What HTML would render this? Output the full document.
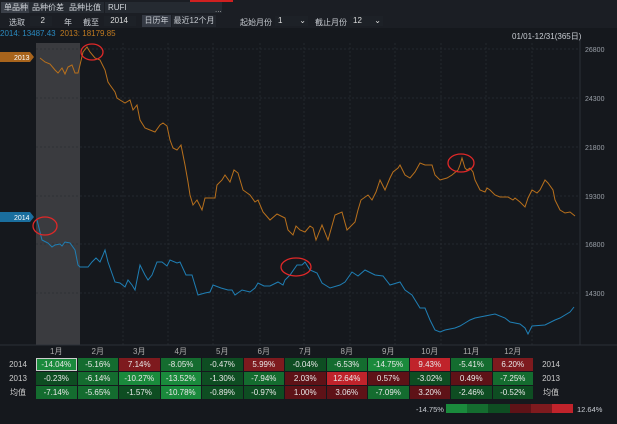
<!DOCTYPE html>
<html><head><meta charset="utf-8"><style>
*{margin:0;padding:0;box-sizing:border-box}
body{width:617px;height:424px;background:#15181d;font-family:"Liberation Sans","Noto Sans CJK SC",sans-serif;color:#c8ccd2;font-size:8px;position:relative;overflow:hidden}
.a{position:absolute}
.tab{position:absolute;top:2px;height:11px;line-height:11px;font-size:8px;color:#cfd3d8;background:#252a31;padding:0 3px}
.inp{position:absolute;top:16px;height:10px;background:#1d2127;font-size:8px;line-height:10px;color:#ddd}
table{position:absolute;left:0;top:346px;border-collapse:separate;border-spacing:1px 1px;font-size:8px}
td{width:40.5px;height:13px;line-height:13px;text-align:center;color:#e8e8e8;padding:0}
td.l{width:34px;color:#ccc}
tr.h td{height:10px;line-height:10px;color:#aaa}
.g3{background:#1a8a3c}.g2{background:#146c2f}.g1{background:#0e4d22}
.r1{background:#5e1217}.r2{background:#7e1a1e}.r3{background:#c0232b}
</style></head><body>
<div class="a" style="left:0;top:0;width:617px;height:14px;background:#1b1e24"></div>
<div class="a" style="left:190px;top:0;width:43px;height:2px;background:#d02020"></div>
<div class="tab" style="left:1px;background:#3a3f48">单品种</div>
<div class="tab" style="left:29px">品种价差</div>
<div class="tab" style="left:66px">品种比值</div>
<div class="tab" style="left:105px;width:117px">RUFI</div>
<div class="a" style="left:215px;top:5px;color:#aaa">...</div>
<div class="a" style="left:0;top:14px;width:617px;height:14px;background:#1b1e24"></div>
<div class="a" style="left:9px;top:17px">选取</div>
<div class="inp" style="left:30px;width:22px;text-align:right;padding-right:7px">2</div>
<div class="a" style="left:64px;top:17px">年</div>
<div class="a" style="left:83px;top:17px">截至</div>
<div class="inp" style="left:104px;width:32px;text-align:right;padding-right:8px">2014</div>
<div class="a" style="left:142px;top:15px;height:12px;width:29px;background:#353a44;line-height:12px;text-align:center">日历年</div>
<div class="a" style="left:172px;top:15px;height:12px;width:44px;background:#22262d;line-height:12px;text-align:center">最近12个月</div>
<div class="a" style="left:240px;top:17px">起始月份</div>
<div class="inp" style="left:275px;width:33px;padding-left:3px">1 <span style="float:right;padding-right:2px">⌄</span></div>
<div class="a" style="left:315px;top:17px">截止月份</div>
<div class="inp" style="left:350px;width:33px;padding-left:3px">12 <span style="float:right;padding-right:2px">⌄</span></div>
<div class="a" style="left:0;top:29px;font-size:8px;color:#2a8ac0">2014: 13487.43</div>
<div class="a" style="left:60px;top:29px;font-size:8px;color:#c07a20">2013: 18179.85</div>
<div class="a" style="left:512px;top:31px;font-size:8px">01/01-12/31(365日)</div>
<svg class="a" style="left:0;top:0" width="617" height="424">
<rect x="36" y="43" width="44" height="302" fill="#3a3b3f"/>
<g stroke="#2a2e35" stroke-width="0.7" stroke-dasharray="2,2">
<line x1="36" x2="580" y1="49" y2="49"/><line x1="36" x2="580" y1="98" y2="98"/><line x1="36" x2="580" y1="147" y2="147"/><line x1="36" x2="580" y1="196" y2="196"/><line x1="36" x2="580" y1="244" y2="244"/><line x1="36" x2="580" y1="293" y2="293"/>
<line x1="123" x2="123" y1="43" y2="345"/><line x1="168" x2="168" y1="43" y2="345"/><line x1="213" x2="213" y1="43" y2="345"/><line x1="260" x2="260" y1="43" y2="345"/><line x1="304" x2="304" y1="43" y2="345"/><line x1="350" x2="350" y1="43" y2="345"/><line x1="395" x2="395" y1="43" y2="345"/><line x1="441" x2="441" y1="43" y2="345"/><line x1="486" x2="486" y1="43" y2="345"/><line x1="532" x2="532" y1="43" y2="345"/>
</g>
<line x1="580" x2="580" y1="40" y2="345" stroke="#2c3038"/>
<polyline fill="none" stroke="#b8701c" stroke-width="1" points="40,58 45,62 50,64 55,70 58,73 62,68 65,74 68,67 72,65 75,73 78,73 80,65 83,52 87,47 90,52 95,58 100,60 105,70 108,82 110,85 115,92 117,98 120,100 125,103 130,100 133,110 137,105 140,120 145,128 150,130 155,132 160,125 163,123 167,126 170,140 173,148 177,150 181,145 185,165 188,182 190,195 193,205 197,200 202,210 205,198 210,198 215,198 217,185 222,180 225,175 230,182 234,170 238,173 243,190 250,195 255,202 258,200 263,212 270,220 277,214 285,218 288,230 293,235 296,226 300,230 305,232 310,226 313,228 316,240 322,225 328,240 335,215 342,212 347,230 352,225 355,222 358,210 361,200 368,195 372,200 376,192 380,180 385,190 390,178 393,172 398,168 400,165 405,175 410,178 415,172 420,163 425,165 432,165 435,175 440,180 447,178 452,175 458,170 460,165 462,158 465,168 467,170 470,168 473,172 475,180 480,190 485,192 487,188 490,190 495,195 500,197 508,197 513,200 515,198 520,202 525,207 528,198 532,190 537,193 540,190 545,180 548,183 553,190 555,200 560,210 565,213 570,212 575,216"/>
<polyline fill="none" stroke="#1f7fb5" stroke-width="1" points="37,220 42,240 48,243 52,247 55,245 60,244 62,246 65,242 70,243 75,250 78,265 80,267 88,267 92,262 96,258 100,262 103,255 105,250 108,262 115,282 120,283 125,287 128,280 132,285 135,290 140,265 145,275 148,280 152,275 157,262 162,262 167,266 170,260 177,263 180,262 186,275 192,275 198,295 205,293 210,292 213,285 221,288 228,290 232,290 235,295 242,290 250,292 255,288 258,283 264,286 270,286 278,282 283,285 285,280 290,275 297,265 302,265 305,262 310,270 317,273 322,283 330,288 340,285 345,282 352,272 358,276 365,270 375,275 383,276 390,285 400,282 405,290 412,295 420,308 425,308 430,320 435,330 440,332 445,330 455,328 460,326 465,323 470,320 475,318 485,316 495,314 505,318 510,322 520,324 525,328 528,334 532,326 545,325 555,320 560,318 570,312 574,307"/>
<g fill="none" stroke="#e02828" stroke-width="1.3">
<ellipse cx="92" cy="52" rx="11" ry="8"/><ellipse cx="45" cy="226" rx="12" ry="9"/><ellipse cx="461" cy="163" rx="13" ry="9"/><ellipse cx="296" cy="267" rx="15" ry="9"/>
</g>
<path d="M0,52h30l4,5l-4,5h-30z" fill="#a8641c"/><text x="14" y="60" font-size="7" fill="#fff" font-family="Liberation Sans">2013</text>
<path d="M0,212h30l4,5l-4,5h-30z" fill="#1a6e9e"/><text x="14" y="220" font-size="7" fill="#fff" font-family="Liberation Sans">2014</text>
<g font-size="7" fill="#9aa0a8" font-family="Liberation Sans">
<text x="585" y="52">26800</text><text x="585" y="101">24300</text><text x="585" y="150">21800</text><text x="585" y="199">19300</text><text x="585" y="247">16800</text><text x="585" y="296">14300</text>
</g>
<line x1="0" x2="617" y1="345" y2="345" stroke="#2c3038"/>
</svg>
<table>
<tr class="h"><td class="l"></td><td>1月</td><td>2月</td><td>3月</td><td>4月</td><td>5月</td><td>6月</td><td>7月</td><td>8月</td><td>9月</td><td>10月</td><td>11月</td><td>12月</td><td class="l"></td></tr>
<tr><td class="l">2014</td><td class="g3" style="outline:1px solid #ccc;outline-offset:-1px">-14.04%</td><td class="g2">-5.16%</td><td class="r2">7.14%</td><td class="g2">-8.05%</td><td class="g1">-0.47%</td><td class="r2">5.99%</td><td class="g1">-0.04%</td><td class="g2">-6.53%</td><td class="g3">-14.75%</td><td class="r3">9.43%</td><td class="g2">-5.41%</td><td class="r2">6.20%</td><td class="l">2014</td></tr>
<tr><td class="l">2013</td><td class="g1">-0.23%</td><td class="g2">-6.14%</td><td class="g3">-10.27%</td><td class="g3">-13.52%</td><td class="g1">-1.30%</td><td class="g2">-7.94%</td><td class="r1">2.03%</td><td class="r3">12.64%</td><td class="r1">0.57%</td><td class="g1">-3.02%</td><td class="r1">0.49%</td><td class="g2">-7.25%</td><td class="l">2013</td></tr>
<tr><td class="l">均值</td><td class="g2">-7.14%</td><td class="g2">-5.65%</td><td class="g1">-1.57%</td><td class="g3">-10.78%</td><td class="g1">-0.89%</td><td class="g1">-0.97%</td><td class="r1">1.00%</td><td class="r1">3.06%</td><td class="g2">-7.09%</td><td class="r1">3.20%</td><td class="g1">-2.46%</td><td class="g1">-0.52%</td><td class="l">均值</td></tr>
</table>
<div class="a" style="left:416px;top:405px;font-size:7.5px">-14.75%</div>
<div class="a" style="left:446px;top:404px;width:127px;height:9px;display:flex">
<div class="g3" style="flex:1"></div><div class="g2" style="flex:1"></div><div class="g1" style="flex:1"></div><div class="r1" style="flex:1"></div><div class="r2" style="flex:1"></div><div class="r3" style="flex:1"></div></div>
<div class="a" style="left:577px;top:405px;font-size:7.5px">12.64%</div>
</body></html>
